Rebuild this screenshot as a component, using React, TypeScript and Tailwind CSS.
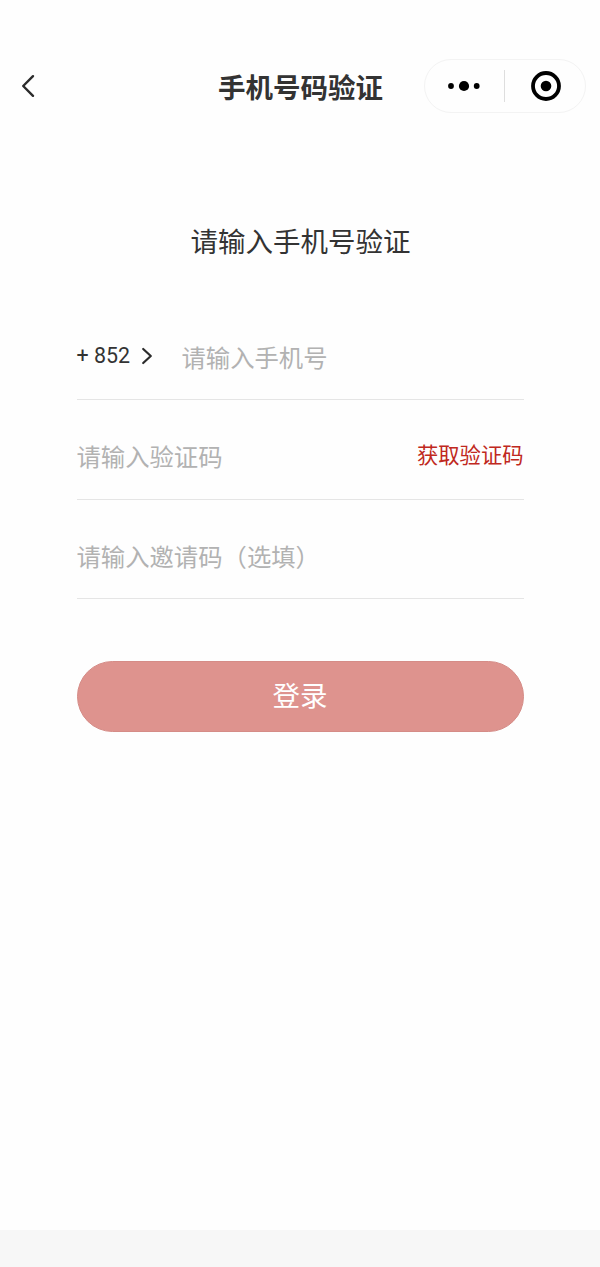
import { useState } from "react";

// --- Icons ---

const BackIcon = () => (
  <svg width="14" height="24" viewBox="0 0 14 24" fill="none" stroke="#2b2b2b" strokeWidth="2.4">
    <path d="M12 2.2 L2.2 12 L12 21.8" strokeLinecap="round" strokeLinejoin="round" />
  </svg>
);

const ChevronIcon = () => (
  <svg width="12" height="18" viewBox="0 0 12 18" fill="none" stroke="#2b2b2b" strokeWidth="2.2">
    <path d="M2.2 2 L9.8 9 L2.2 16" strokeLinecap="round" strokeLinejoin="round" />
  </svg>
);

const MoreIcon = () => (
  <svg width="32" height="12" viewBox="0 0 32 12" fill="#000">
    <circle cx="3" cy="6" r="2.9" />
    <circle cx="16" cy="6" r="5.1" />
    <circle cx="28.7" cy="6" r="2.9" />
  </svg>
);

const CloseIcon = () => (
  <svg width="30" height="30" viewBox="0 0 30 30">
    <circle cx="15" cy="15" r="13" fill="none" stroke="#000" strokeWidth="3.8" />
    <circle cx="15" cy="15" r="5.3" fill="#000" />
  </svg>
);

const inputClass =
  "min-w-0 flex-1 bg-transparent pt-0.5 text-[24.35px] leading-9 text-[#333] outline-none placeholder:text-[#b2b2b2] placeholder:opacity-100";

export default function App() {
  const [phone, setPhone] = useState("");
  const [code, setCode] = useState("");
  const [invite, setInvite] = useState("");

  return (
    <div className="flex h-[1267px] w-[600px] flex-col bg-[#fefefe] font-['Roboto','Noto_Sans_CJK_SC',sans-serif] text-[#333]">
      <header className="mt-[59px] grid h-[54px] grid-cols-[200px_201px_1fr] items-center">
        <button className="ml-[21px] w-fit" aria-label="back">
          <BackIcon />
        </button>
        <h1 className="pt-[5px] text-center text-[27.5px] leading-10 font-bold whitespace-nowrap">手机号码验证</h1>
        <div className="ml-[22.5px] flex h-[54px] w-[162px] items-center rounded-full border border-[#f3f3f3]">
          <button className="flex w-[79px] justify-center pr-px" aria-label="more">
            <MoreIcon />
          </button>
          <span className="h-8 w-px bg-[#dedede]" />
          <button className="flex flex-1 justify-center pl-0.5" aria-label="close">
            <CloseIcon />
          </button>
        </div>
      </header>

      <main className="flex flex-1 flex-col px-[76.5px] pt-[110px]">
        <h2 className="pl-px text-center text-[27.5px] leading-10">请输入手机号验证</h2>

        <form className="mt-[37px]" onSubmit={(e) => e.preventDefault()}>
          <div className="flex h-[100px] items-center border-b border-[#e5e5e5] pt-4">
            <button type="button" className="flex w-[105px] items-center gap-[11px] pb-[3px] text-[21.4px] leading-8">
              <span>+ 852</span>
              <ChevronIcon />
            </button>
            <input className={inputClass} placeholder="请输入手机号" value={phone} onChange={(e) => setPhone(e.target.value)} />
          </div>
          <div className="flex h-[99.5px] items-center border-b border-[#e5e5e5] pt-4">
            <input className={inputClass} placeholder="请输入验证码" value={code} onChange={(e) => setCode(e.target.value)} />
            <button type="button" className="pb-[3px] text-[21.3px] leading-8 text-[#c02820]">
              获取验证码
            </button>
          </div>
          <div className="flex h-[99.5px] items-center border-b border-[#e5e5e5] pt-4">
            <input className={inputClass} placeholder="请输入邀请码（选填）" value={invite} onChange={(e) => setInvite(e.target.value)} />
          </div>

          <button className="mt-[62px] h-[71px] w-full rounded-full border border-[#d58c87] bg-[#de938e] text-[27.5px] leading-10 text-white">
            登录
          </button>
        </form>
      </main>

      <footer className="h-[37px] bg-[#f7f7f7]" />
    </div>
  );
}
